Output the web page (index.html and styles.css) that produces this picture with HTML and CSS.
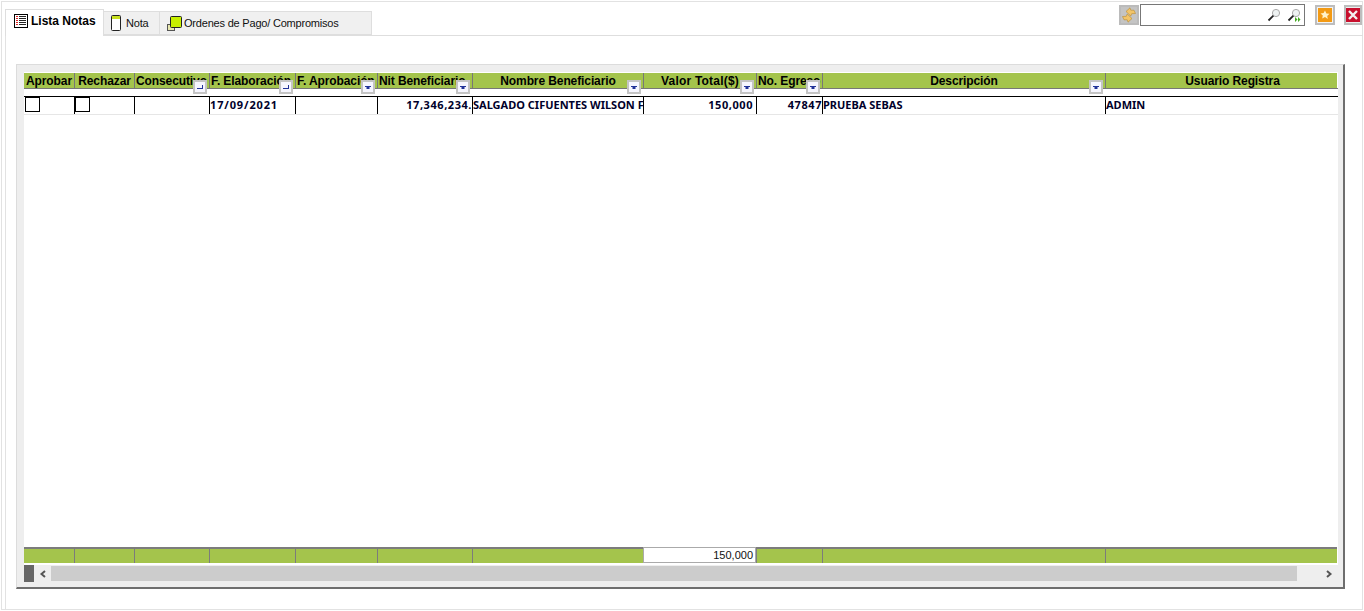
FILE: index.html
```html
<!DOCTYPE html>
<html lang="es">
<head>
<meta charset="utf-8">
<title>Lista Notas</title>
<link rel="stylesheet" href="styles.css">
</head>
<body>
<div class="frame">
  <div class="top">
    <div class="tabs">
      <div class="tab active">
        <svg class="ico" viewBox="0 0 14 14"><rect x=".5" y=".5" width="13" height="13" fill="#fff" stroke="#000"/><path d="M5 2.500h7M5 4.500h7M5 6.500h7M5 8.500h7M5 10.500h7" stroke="#222"/><path d="M2 2.500h2M2 4.500h2M2 6.500h2M2 8.500h2M2 10.500h2" stroke="#d22"/></svg>
        <span>Lista Notas</span>
      </div>
      <div class="tab nota">
        <svg class="ico" viewBox="0 0 12 16"><rect x="1.500" y=".5" width="9" height="15" rx="1" fill="#fff" stroke="#222"/><rect x="2" y="1" width="8" height="3" fill="#c8e020"/></svg>
        <span>Nota</span>
      </div>
      <div class="tab ordenes">
        <svg class="ico" viewBox="0 0 15 15"><rect x=".5" y="8.500" width="7" height="6" fill="#e8e8b0" stroke="#555"/><rect x="3.500" y=".5" width="11" height="11" rx="1" fill="#c8f000" stroke="#222"/></svg>
        <span>Ordenes de Pago/ Compromisos</span>
      </div>
    </div>
    <div class="tools">
      <button class="tool refresh" type="button" aria-label="Actualizar"><svg viewBox="0 0 16 16"><path d="M5 4.500L9 .8l.8 2.400H13l1.500 3.300-3.800.2-.9 2.300z" fill="#f2c468" stroke="#b08020" stroke-width=".5"/><path d="M11 11.500L7 15.200l-.8-2.400H3L1.500 9.500l3.800-.2.900-2.300z" fill="#f2c468" stroke="#b08020" stroke-width=".5"/></svg></button>
      <div class="search">
        <svg class="lens" viewBox="0 0 14 14"><circle cx="9" cy="5" r="3.600" fill="#eef2f2" stroke="#aaa"/><path d="M6.400 7.600L1.500 12.500" stroke="#222" stroke-width="1.800"/></svg>
        <svg class="lens" viewBox="0 0 14 14"><circle cx="9" cy="5" r="3.600" fill="#eef2f2" stroke="#aaa"/><path d="M6.400 7.600L1.500 12.500" stroke="#222" stroke-width="1.800"/><path d="M8 9l2.500 2.500L8 14zM11 9l2.500 2.500L11 14z" fill="#4a2"/></svg>
      </div>
      <button class="tool star" type="button" aria-label="Favorito"><svg viewBox="0 0 14 14"><rect width="14" height="14" fill="#f39a13"/><path d="M7 2.500l1.400 2.900 3.100.4-2.300 2.100.6 3.100L7 9.100l-2.800 1.500.6-3.100-2.300-2.100 3.100-.4z" fill="#fff2c8"/></svg></button>
      <button class="tool close" type="button" aria-label="Cerrar"><svg viewBox="0 0 14 14"><rect width="14" height="14" fill="#c8102e"/><path d="M3 3l8 8M11 3l-8 8" stroke="#f4f0f0" stroke-width="2.400"/></svg></button>
    </div>
  </div>
  <div class="pane">
    <div class="panel">
      <div class="grid">
        <div class="row head">
          <div class="c"><span class="lbl">Aprobar</span></div>
          <div class="c"><span class="lbl">Rechazar</span></div>
          <div class="c left"><span class="lbl">Consecutivo</span><i class="fb sort"></i></div>
          <div class="c left"><span class="lbl">F. Elaboración</span><i class="fb sort"></i></div>
          <div class="c left"><span class="lbl">F. Aprobación</span><i class="fb"></i></div>
          <div class="c left"><span class="lbl">Nit Beneficiario</span><i class="fb"></i></div>
          <div class="c"><span class="lbl">Nombre Beneficiario</span><i class="fb"></i></div>
          <div class="c wide"><span class="lbl">Valor Total($)</span><i class="fb"></i></div>
          <div class="c left"><span class="lbl">No. Egreso</span><i class="fb"></i></div>
          <div class="c"><span class="lbl">Descripción</span><i class="fb"></i></div>
          <div class="c shifted"><span class="lbl">Usuario Registra</span></div>
        </div>
        <div class="row data">
          <div class="c"><span class="chk"></span></div>
          <div class="c"><span class="chk"></span></div>
          <div class="c"></div>
          <div class="c date">17/09/2021</div>
          <div class="c"></div>
          <div class="c num">17,346,234.</div>
          <div class="c">SALGADO CIFUENTES WILSON F</div>
          <div class="c num pad">150,000</div>
          <div class="c num">47847</div>
          <div class="c">PRUEBA SEBAS</div>
          <div class="c">ADMIN</div>
        </div>
        <div class="fill"></div>
        <div class="row foot">
          <div class="c"></div><div class="c"></div><div class="c"></div><div class="c"></div><div class="c"></div><div class="c"></div><div class="c"></div>
          <div class="c total">150,000</div>
          <div class="c"></div><div class="c"></div><div class="c"></div>
        </div>
      </div>
      <div class="scroll">
        <span class="grip"></span>
        <span class="arrow"><svg viewBox="0 0 8 8"><path d="M6 1L2.500 4 6 7" fill="none" stroke="#555" stroke-width="2"/></svg></span>
        <span class="track"></span>
        <span class="arrow end"><svg viewBox="0 0 8 8"><path d="M2 1l3.500 3L2 7" fill="none" stroke="#555" stroke-width="2"/></svg></span>
      </div>
    </div>
  </div>
</div>
</body>
</html>
```
FILE: styles.css
```css
* { box-sizing: border-box; }
html, body { margin: 0; height: 100%; background: #fff; overflow: hidden; }
body { padding: 1px; font-family: "Liberation Sans", Arial, sans-serif; }
.frame {
  height: 609px;
  border: 1px solid #e2e2e2;
  padding: 2px 0 0 3px;
  display: flex;
  flex-direction: column;
}
.top { display: flex; height: 31px; flex: none; position: relative; z-index: 1; }
.tabs { display: flex; align-items: flex-end; height: 31px; }
.tab {
  display: flex;
  align-items: center;
  height: 24px;
  font-size: 11px;
  letter-spacing: -.2px;
  background: #f0f0f0;
  border: 1px solid #dedede;
  border-left: 0;
  color: #111;
}
.tab.active {
  width: 99px;
  height: 27px;
  background: #fff;
  border: 1px solid #dedede;
  border-bottom: 0;
  margin-bottom: -1px;
  padding: 0 0 5px 8px;
  gap: 3px;
  font-size: 12px;
  font-weight: 700;
  letter-spacing: 0;
  color: #000;
}
.tab.nota { width: 56px; padding-left: 6px; gap: 4px; }
.tab.ordenes { width: 212px; padding-left: 7px; gap: 2px; }
.ico { width: 14px; height: 14px; flex: none; }
.nota .ico { width: 12px; height: 16px; }
.ordenes .ico { width: 15px; height: 15px; }
.tools { margin-left: auto; display: flex; align-items: flex-start; }
.tool {
  width: 20px;
  height: 20px;
  padding: 2px;
  margin: 1px 0 0;
  border: 2px solid #bdbdbd;
  background: #e8e8e8;
  display: block;
}
.tool svg { display: block; width: 100%; height: 100%; }
.refresh { margin-right: 1px; background: #c4c4c4; border-color: #bbb; padding: 0; }
.star { margin-left: 10px; margin-right: 9px; background: #f2f2f2; padding: 1px; }
.close { width: 18px; background: #eee; padding: 0; }
.search {
  width: 165px;
  height: 22px;
  border: 1px solid #777;
  background: #fff;
  display: flex;
  justify-content: flex-end;
  align-items: center;
  gap: 6px;
  padding-right: 3px;
}
.lens { width: 14px; height: 14px; }
.pane {
  flex: 1;
  margin-right: -1px;
  border-top: 1px solid #dedede;
  border-left: 1px solid #e2e2e2;
  padding: 28px 18px 20px 10px;
  display: flex;
}
.panel {
  flex: 1;
  background: #eee;
  border-top: 1px solid #dcdcdc;
  border-left: 1px solid #dcdcdc;
  border-right: 2px solid #6e6e6e;
  border-bottom: 2px solid #6e6e6e;
  padding: 7px 5px 0 7px;
  display: flex;
  flex-direction: column;
}
.grid {
  flex: none;
  height: 493px;
  background: #fff;
  display: flex;
  flex-direction: column;
}
.row {
  display: grid;
  grid-template-columns: 50px 60px 75px 86px 82px 95px 171px 113px 66px 283px 232px;
  flex: none;
}
.c { position: relative; min-width: 0; white-space: nowrap; }
.head { height: 16px; margin-top: 1px; border-bottom: 1px solid #777; }
.head .c {
  background: #a4c44c;
  border-left: 1px solid #777;
  font-size: 12px;
  font-weight: 700;
  letter-spacing: -.1px;
  line-height: 16px;
  text-align: center;
  color: #000;
}
.head .c:first-child { border-left: 0; }
.lbl { display: block; overflow: hidden; height: 15px; }
.head .c.left { text-align: left; padding-left: 1px; }
.head .c.shifted { padding-left: 22px; }
.head .c.wide { letter-spacing: .2px; }
.c .fb {
  position: absolute;
  right: 2px;
  top: 7px;
  width: 14px;
  height: 14px;
  background: #f6f6ff;
  border: 2px solid #c4c4c4;
}
.c .fb::after {
  content: "";
  position: absolute;
  left: 2px;
  top: 4px;
  width: 6px;
  height: 3px;
  background: #223399;
  clip-path: polygon(0 0, 100% 0, 100% 34%, 75% 34%, 75% 100%, 25% 100%, 25% 34%, 0 34%);
}
.c .fb.sort::after {
  top: 6px;
  height: 1px;
  clip-path: none;
}
.c .fb.sort::before {
  content: "";
  position: absolute;
  left: 7px;
  top: 3px;
  width: 1px;
  height: 4px;
  background: #223399;
}
.data {
  margin-top: 7px;
  height: 19px;
  border-top: 1px solid #000;
  border-bottom: 1px solid #e6e6e6;
}
.data .c {
  border-left: 1px solid #000;
  font-family: "Noto Sans", Tahoma, sans-serif;
  font-size: 11px;
  font-weight: 700;
  line-height: 16px;
  color: #00002a;
  overflow: hidden;
}
.data .c:first-child { border-left: 0; }
.data .date { letter-spacing: .85px; }
.data .num { text-align: right; letter-spacing: .55px; }
.data .pad { padding-right: 3px; }
.chk {
  display: block;
  width: 15px;
  height: 15px;
  margin: 0 0 0 1px;
  border: 1px solid #000;
  background: #fff;
}
.data .c:nth-child(2) .chk { margin-left: 0; }
.fill { flex: 1; }
.foot { height: 15px; margin-bottom: 3px; }
.foot .c {
  background: #a4c44c;
  border-top: 2px solid #7c7c7c;
  border-left: 1px solid #7c7c7c;
}
.foot .c:first-child { border-left: 0; }
.foot .total {
  background: #fff;
  border: 1px solid #aaa;
  font-size: 11px;
  line-height: 13px;
  text-align: right;
  padding: 1px 2px 0 0;
  color: #111;
}
.scroll { flex: none; display: flex; align-items: stretch; height: 17px; }
.grip { width: 10px; background: #666; }
.arrow { width: 17px; display: flex; align-items: center; justify-content: center; }
.arrow svg { width: 8px; height: 8px; }
.track { width: 1246px; background: #ccc; margin: 1px 0; }
.arrow.end { flex: 1; padding-left: 22px; }
```
